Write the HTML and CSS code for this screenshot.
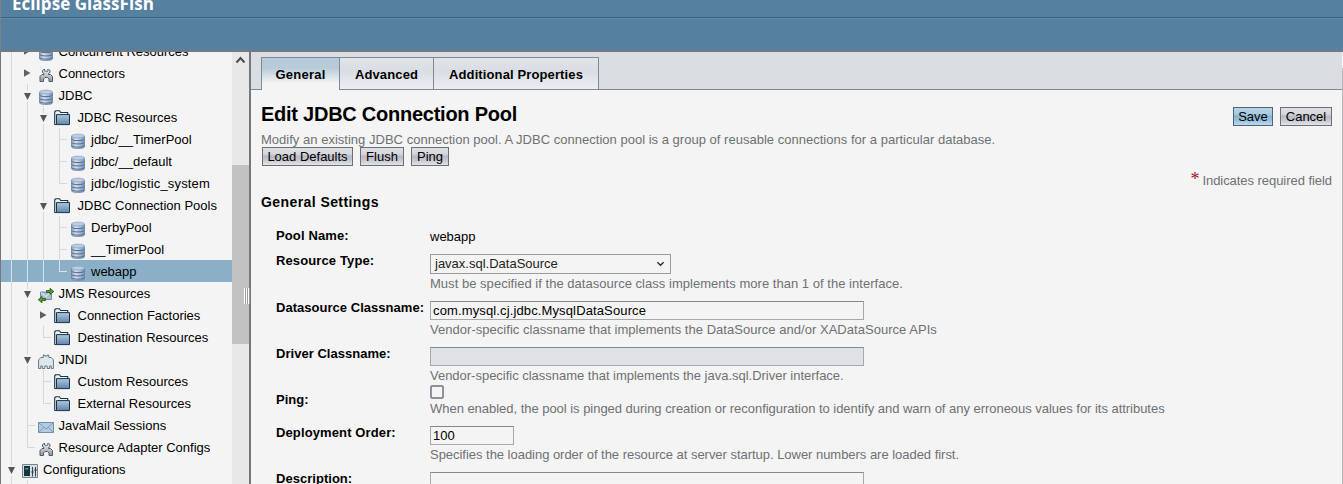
FILE: index.html
```html
<!DOCTYPE html>
<html lang="en">
<head>
<meta charset="utf-8">
<title>Edit JDBC Connection Pool</title>
<link rel="stylesheet" href="styles.css">
</head>
<body>
<svg class="defs" width="0" height="0">
  <defs>
    <linearGradient id="gDb" x1="0" x2="1"><stop offset="0" stop-color="#8ba2bf"/><stop offset=".35" stop-color="#d3e0f0"/><stop offset="1" stop-color="#7590b3"/></linearGradient>
    <linearGradient id="gFolder" x1="0" y1="0" x2="0" y2="1"><stop offset="0" stop-color="#b0c8de"/><stop offset="1" stop-color="#5f84aa"/></linearGradient>
    <linearGradient id="gGray" x1="0" y1="0" x2="0" y2="1"><stop offset="0" stop-color="#eceff2"/><stop offset="1" stop-color="#8f989f"/></linearGradient>
    <symbol id="db" viewBox="0 0 16 16">
      <path d="M1.500 3v10.700c0 2.500 13 2.500 13 0V3z" fill="url(#gDb)" stroke="#6f86a5" stroke-width=".8"/>
      <ellipse cx="8" cy="3" rx="6.500" ry="1.900" fill="#b9cde4" stroke="#8ea3be" stroke-width=".7"/>
      <path d="M1.500 6c1 2.200 12 2.200 13 0M1.500 9.300c1 2.200 12 2.200 13 0M1.500 12.500c1 2.200 12 2.200 13 0" fill="none" stroke="#526a8c" stroke-width="1"/>
    </symbol>
    <symbol id="folder" viewBox="0 0 16 16">
      <path d="M.7 14.500V1.800L1.700.8H5.500l1.200 1.700h7v2.200" fill="#edf1f5" stroke="#1c3348" stroke-width="1.100"/>
      <path d="M2.500 4.600h13v10h-13z" fill="url(#gFolder)" stroke="#1c3348" stroke-width="1" stroke-linejoin="round"/>
      <path d="M.5 14.600h2" stroke="#1c3348"/>
    </symbol>
    <symbol id="connector" viewBox="0 0 16 16">
      <path d="M2 14.500V9.500L4 7.500h2V6.500L4.500 5.500V3.500L6 2.500h4.500L12 3.500v2L10.500 6.500v1h2l2 2v5h-3.500V12L9.500 10.500h-2.500L5.500 12v2.500z" fill="url(#gGray)" stroke="#535b62" stroke-width="1"/>
      <path d="M7 2h2.500v2H7z" fill="#f4f4f4"/>
      <path d="M6.700 2.500v1.800h3.100V2.500" fill="none" stroke="#535b62" stroke-width=".8"/>
    </symbol>
    <symbol id="jndi" viewBox="0 0 16 16">
      <path d="M.6 15.500V6.800L2.800 4.500H5.300V2h1.500v1h2.500V2h1.500v2.500h2.500l2.100 2.300v8.700h-2.200v-2.500h-1.500v2.500H9.200v-2.500H6.800v2.500H4.300v-2.500H2.800v2.500z" fill="#dde7ef" stroke="#677784" stroke-width="1"/>
    </symbol>
    <symbol id="jms" viewBox="0 0 16 16">
      <path d="M2.500 5h11v7.500h-11z" fill="#a9bfdc" stroke="#5e7896" stroke-width=".8"/>
      <path d="M3 5.500l5 4 5-4" fill="none" stroke="#eef3fa" stroke-width=".8"/>
      <path d="M8.500 3.500H12V1.300L15.800 4.500 12 7.500V5.500H8.500z" fill="#5b9e2d" stroke="#1d4f0c" stroke-width=".8"/>
      <path d="M7.500 11.500H4V9.500L.3 12.800 4 15.800v-2.300h3.500z" fill="#5b9e2d" stroke="#1d4f0c" stroke-width=".8"/>
    </symbol>
    <symbol id="mail" viewBox="0 0 16 16">
      <path d="M.5 3.500h15v10H.5z" fill="#b3cbe0" stroke="#7390aa" stroke-width="1"/>
      <path d="M1 4l7 6 7-6M1 13.200l4.500-4.700M15 13.200l-4.500-4.700" fill="none" stroke="#6e8ba5" stroke-width=".8"/>
    </symbol>
    <symbol id="config" viewBox="0 0 16 16">
      <path d="M.5 1.500h15v13H.5z" fill="#d6dce1" stroke="#75838c"/>
      <path d="M2 3h6v10H2z" fill="#123640"/>
      <path d="M3.200 5h3v1.500h-3z" fill="#63909b"/>
      <path d="M10.500 4v9.500M13.500 4v9.500M9.200 9h2.600M12 7h2.800" stroke="#27333b" stroke-width=".9"/>
    </symbol>
  </defs>
</svg>
<header class="masthead">
  <div class="brand">Eclipse GlassFish</div>
  <div class="masthead-bar"></div>
</header>
<div class="frames">
  <nav class="sidebar">
    <div class="tree">
      <div class="row"><i class="c v"></i><i class="c right"></i><svg class="icon"><use href="#db"/></svg><span class="t2">Concurrent Resources</span></div>
      <div class="row"><i class="c v"></i><i class="c right"></i><svg class="icon"><use href="#connector"/></svg><span class="t2">Connectors</span></div>
      <div class="row"><i class="c v"></i><i class="c down"></i><svg class="icon"><use href="#db"/></svg><span class="t2">JDBC</span></div>
      <div class="row"><i class="c v"></i><i class="c v"></i><i class="c down"></i><svg class="icon folder"><use href="#folder"/></svg><span class="t3">JDBC Resources</span></div>
      <div class="row"><i class="c v"></i><i class="c v"></i><i class="c v"></i><i class="c tee"></i><svg class="icon"><use href="#db"/></svg><span class="t4">jdbc/__TimerPool</span></div>
      <div class="row"><i class="c v"></i><i class="c v"></i><i class="c v"></i><i class="c tee"></i><svg class="icon"><use href="#db"/></svg><span class="t4">jdbc/__default</span></div>
      <div class="row"><i class="c v"></i><i class="c v"></i><i class="c v"></i><i class="c elbow"></i><svg class="icon"><use href="#db"/></svg><span class="t4 wide">jdbc/logistic_system</span></div>
      <div class="row"><i class="c v"></i><i class="c v"></i><i class="c down"></i><svg class="icon folder"><use href="#folder"/></svg><span class="t3">JDBC Connection Pools</span></div>
      <div class="row"><i class="c v"></i><i class="c v"></i><i class="c v"></i><i class="c tee"></i><svg class="icon"><use href="#db"/></svg><span class="t4">DerbyPool</span></div>
      <div class="row"><i class="c v"></i><i class="c v"></i><i class="c v"></i><i class="c tee"></i><svg class="icon"><use href="#db"/></svg><span class="t4">__TimerPool</span></div>
      <div class="row selected"><i class="c v"></i><i class="c v"></i><i class="c v"></i><i class="c elbow"></i><svg class="icon"><use href="#db"/></svg><span class="t4">webapp</span></div>
      <div class="row"><i class="c v"></i><i class="c down"></i><svg class="icon"><use href="#jms"/></svg><span class="t2">JMS Resources</span></div>
      <div class="row"><i class="c v"></i><i class="c v"></i><i class="c right"></i><svg class="icon folder"><use href="#folder"/></svg><span class="t3">Connection Factories</span></div>
      <div class="row"><i class="c v"></i><i class="c v"></i><i class="c elbow"></i><svg class="icon folder"><use href="#folder"/></svg><span class="t3">Destination Resources</span></div>
      <div class="row"><i class="c v"></i><i class="c down"></i><svg class="icon"><use href="#jndi"/></svg><span class="t2">JNDI</span></div>
      <div class="row"><i class="c v"></i><i class="c v"></i><i class="c tee"></i><svg class="icon folder"><use href="#folder"/></svg><span class="t3">Custom Resources</span></div>
      <div class="row"><i class="c v"></i><i class="c v"></i><i class="c elbow"></i><svg class="icon folder"><use href="#folder"/></svg><span class="t3">External Resources</span></div>
      <div class="row"><i class="c v"></i><i class="c tee"></i><svg class="icon"><use href="#mail"/></svg><span class="t2">JavaMail Sessions</span></div>
      <div class="row"><i class="c v"></i><i class="c elbow"></i><svg class="icon"><use href="#connector"/></svg><span class="t2">Resource Adapter Configs</span></div>
      <div class="row"><i class="c down"></i><svg class="icon"><use href="#config"/></svg><span class="t1">Configurations</span></div>
      <div class="row"><i class="c v"></i><i class="c v"></i></div>
    </div>
    <div class="scrollbar">
      <svg class="scroll-up" viewBox="0 0 17 16"><path d="M4.500 10.500 8.500 6l4 4.500" fill="none" stroke="#4c4c4c" stroke-width="2"/></svg>
      <div class="thumb"></div>
    </div>
  </nav>
  <div class="splitter"><span class="grip"></span></div>
  <main class="content">
    <div class="tabs">
      <a class="tab active">General</a><a class="tab advanced">Advanced</a><a class="tab additional">Additional Properties</a>
    </div>
    <div class="page">
      <div class="title-row">
        <h1>Edit JDBC Connection Pool</h1>
        <div class="actions"><button class="btn primary save">Save</button><button class="btn cancel">Cancel</button></div>
      </div>
      <p class="intro">Modify an existing JDBC connection pool. A JDBC connection pool is a group of reusable connections for a particular database.</p>
      <div class="tools"><button class="btn load">Load Defaults</button><button class="btn flush">Flush</button><button class="btn ping">Ping</button></div>
      <p class="required"><span class="star">*</span><span class="required-text">Indicates required field</span></p>
      <h2>General Settings</h2>
      <div class="form">
        <div class="field name"><label>Pool Name:</label><div class="value"><span class="static">webapp</span></div></div>
        <div class="field type"><label>Resource Type:</label><div class="value"><div class="select"><span>javax.sql.DataSource</span><svg viewBox="0 0 10 8"><path d="M1.500 2 5 5.500 8.500 2" fill="none" stroke="#333" stroke-width="1.600"/></svg></div><p class="hint loose">Must be specified if the datasource class implements more than 1 of the interface.</p></div></div>
        <div class="field"><label class="snug">Datasource Classname:</label><div class="value"><div class="input"><span class="source">com.mysql.cj.jdbc.MysqlDataSource</span></div><p class="hint loose">Vendor-specific classname that implements the DataSource and/or XADataSource APIs</p></div></div>
        <div class="field driver"><label class="snug">Driver Classname:</label><div class="value"><div class="input disabled"></div><p class="hint">Vendor-specific classname that implements the java.sql.Driver interface.</p></div></div>
        <div class="field check"><label class="snug">Ping:</label><div class="value"><span class="checkbox"></span><p class="hint tight">When enabled, the pool is pinged during creation or reconfiguration to identify and warn of any erroneous values for its attributes</p></div></div>
        <div class="field"><label>Deployment Order:</label><div class="value"><div class="input short">100</div><p class="hint tight">Specifies the loading order of the resource at server startup. Lower numbers are loaded first.</p></div></div>
        <div class="field last"><label class="snug">Description:</label><div class="value"><div class="input"></div></div></div>
      </div>
    </div>
  </main>
  <div class="edge"></div>
</div>
</body>
</html>
```

FILE: styles.css
```css
* { box-sizing: border-box; }
body { margin: 0; height: 484px; overflow: hidden; background: #f4f4f4; color: #000; font: 13px/14px "Liberation Sans", Arial, sans-serif; }
p, h1, h2 { margin: 0; }
p, span, label, h1, h2, a { white-space: nowrap; }
.defs { position: absolute; }

.masthead { height: 52px; background: #5580a0; border-bottom: 2px solid #737a82; border-left: 1px solid #7b8086; overflow: hidden; }
.brand { height: 18px; padding-left: 11px; border-bottom: 1px solid #3c6482; color: #fff; font: bold 17px/8px "Open Sans", sans-serif; letter-spacing: .05px; }
.masthead-bar { height: 33px; border-top: 1px solid #6288a6; }

.frames { display: flex; height: 432px; overflow: hidden; }
.sidebar { display: flex; width: 249px; height: 432px; border-left: 1px solid #777; overflow: hidden; }
.tree { width: 231px; margin-top: -12px; }
.row { display: flex; height: 22px; padding-left: 2px; }
.row.selected { background: #8aafc6; --line: #d5e2eb; }
.c { flex: none; width: 16px; height: 22px; --l: var(--line, #d5d7d9); background-repeat: no-repeat; }
.v { background-image: linear-gradient(var(--l), var(--l)); background-size: 1px 22px; background-position: 8px 0; }
.tee { background-image: linear-gradient(var(--l), var(--l)), linear-gradient(var(--l), var(--l)); background-size: 1px 22px, 8px 1px; background-position: 8px 0, 8px 11px; }
.elbow { background-image: linear-gradient(var(--l), var(--l)), linear-gradient(var(--l), var(--l)); background-size: 1px 12px, 8px 1px; background-position: 8px 0, 8px 11px; }
.down { display: flex; justify-content: center; padding: 9px 0 0 1px; background-image: linear-gradient(var(--l), var(--l)), linear-gradient(var(--l), var(--l)); background-size: 1px 7px, 1px 4px; background-position: 8px 0, 8px 18px; }
.down::before { content: ""; width: 7px; height: 7px; background: #565656; clip-path: polygon(0 0, 100% 0, 50% 100%); }
.right { display: flex; justify-content: center; padding: 7px 0 0 0; }
.right::before { content: ""; width: 7px; height: 8px; background: #606060; clip-path: polygon(0 0, 100% 50%, 0 100%); }
.icon { flex: none; width: 16px; height: 16px; margin: 5px 0 0 3px; }
.icon.folder { margin-top: 4px; }
.row span { line-height: 24px; }
.t1 { margin-left: 5px; letter-spacing: -.1px; }
.t2 { margin-left: 4.5px; }
.t3 { margin-left: 7.5px; }
.t4 { margin-left: 5px; }
.wide { letter-spacing: .17px; }

.scrollbar { width: 17px; height: 432px; background: #e8e8e8; }
.scroll-up { display: block; width: 17px; height: 16px; }
.thumb { height: 179px; margin-top: 97px; background: #c2c2c2; }
.splitter { position: relative; width: 2px; background: #777; }
.grip { position: absolute; left: -5px; top: 236px; width: 6px; height: 16px; background: repeating-linear-gradient(90deg, #fff 0 1px, #999 1px 2px); }

.content { flex: 1; min-width: 0; }
.tabs { display: flex; align-items: flex-end; height: 38px; padding-left: 10px; background: linear-gradient(#7c8a95, #7c8a95) bottom / 100% 1px no-repeat #dadee3; }
.tab { height: 33px; border: 1px solid #7c8a95; border-left: 0; font-weight: bold; font-size: 13px; letter-spacing: .12px; line-height: 33px; text-align: center; background: linear-gradient(#e1e4e9, #d9dde3 40%, #eceef0); }
.tab.active { width: 79px; border-left: 1px solid #7c8a95; border-bottom: 0; letter-spacing: .25px; background: linear-gradient(#b8cbda, #b7cad8 30%, #f4f4f4 80%); }
.advanced { width: 94px; }
.additional { width: 165px; }

.page { padding: 14px 10px 0; }
.title-row { display: flex; justify-content: space-between; height: 29px; }
h1 { font-size: 20px; line-height: 21px; letter-spacing: -.25px; }
.actions { display: flex; gap: 7px; padding-top: 3px; }
.btn { height: 19px; padding: 0; border: 1px solid #6b6f76; background: linear-gradient(#dfe0e4, #d6d7dc 35%, #b9bac4 50%, #c9cad2 75%, #e3e4e8); color: #000; font: 13px/16px "Liberation Sans", Arial, sans-serif; }
.btn.primary { border-color: #47657c; background: linear-gradient(#b9d3e4, #a9cadf 35%, #88b4d0 50%, #9bc3dc 75%, #bbdaeb); }
.save { width: 40px; }
.cancel { width: 52px; }
.intro { color: #6f7173; letter-spacing: .017px; }
.tools { display: flex; gap: 7px; padding-left: 1px; height: 27px; }
.load { width: 91px; }
.flush { width: 44px; }
.ping { width: 38px; }
.required { display: flex; justify-content: flex-end; gap: 3px; height: 21px; color: #6f7173; }
.required-text { letter-spacing: -.05px; }
.star { color: #a0102a; font: 18px/11px "Liberation Serif", serif; }
h2 { height: 34px; font-size: 14px; line-height: 14px; letter-spacing: .42px; }

.form { padding-left: 15px; }
.field { display: grid; grid-template-columns: 154px 1fr; height: 46px; }
.field label { font-size: 13px; font-weight: bold; letter-spacing: .12px; }
.field label.snug { letter-spacing: .03px; }
.name { height: 25px; }
.type { height: 47px; }
.driver { height: 38px; }
.check { height: 41px; }
.check label { padding-top: 8px; }
.last { height: 19px; }
.static { display: block; padding-top: 1px; }
.select { display: flex; align-items: center; justify-content: space-between; width: 241px; height: 20px; padding: 0 5px 0 4px; border: 1px solid #9a9a9e; color: #222; }
.select svg { width: 9px; height: 8px; }
.input { width: 434px; height: 19px; padding-left: 2px; border: 1px solid #a8a8ac; border-top-color: #88888c; line-height: 18px; }
.input.disabled { background: #dee1e6; }
.input.short { width: 84px; }
.source { letter-spacing: .13px; }
.hint { padding-top: 3px; color: #6f7173; letter-spacing: -.015px; }
.hint.loose { letter-spacing: .03px; }
.hint.tight { letter-spacing: -.03px; }
.checkbox { display: block; width: 14px; height: 14px; border: 2px solid #8f8f9d; border-radius: 2px; }
.edge { width: 1px; margin-top: 16px; background: #b5b8bb; }
```
